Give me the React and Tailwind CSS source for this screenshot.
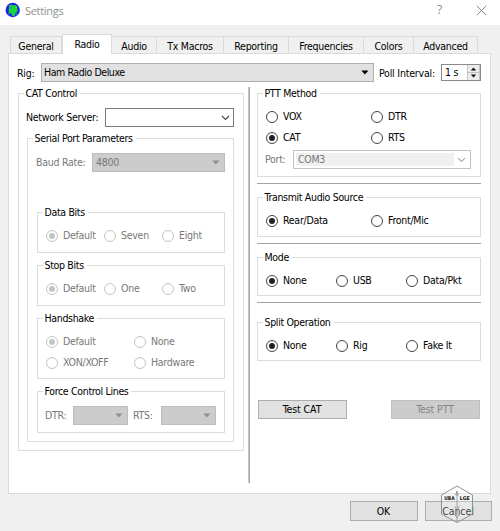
import React from "react";

const TABS = [
  { name: "General", w: "w-[52px]" },
  { name: "Radio", w: "w-[50px]", active: true },
  { name: "Audio", w: "w-[45px]" },
  { name: "Tx Macros", w: "w-[67px]" },
  { name: "Reporting", w: "w-[65px]" },
  { name: "Frequencies", w: "w-[75px]" },
  { name: "Colors", w: "w-[50px]" },
  { name: "Advanced", w: "w-[64px]" },
];

function Group({ title, className, children }) {
  return (
    <fieldset className={`m-0 min-w-0 border border-[#dcdcdc] p-0 ${className}`}>
      <legend className="ml-[5px] h-[13px] pr-[3px] pl-[1.5px] leading-[13px] tracking-[-0.33px] text-black">{title}</legend>
      {children}
    </fieldset>
  );
}

function Radio({ label, checked, disabled, className = "" }) {
  return (
    <label className={`flex h-[13px] items-center gap-[5px] ${disabled ? "text-[#787878]" : "text-black"} ${className}`}>
      <span
        className={`flex size-[12px] shrink-0 items-center justify-center rounded-full border bg-white ${
          disabled ? "border-[#c4c4c4]" : "border-[#444]"
        }`}
      >
        {checked && <span className={`size-[6px] rounded-full ${disabled ? "bg-[#c4c4c4]" : "bg-[#222]"}`} />}
      </span>
      <span className="leading-[13px]">{label}</span>
    </label>
  );
}

function Arrow({ className }) {
  return (
    <svg className={className} width="8" height="5" viewBox="0 0 8 5">
      <path d="M0.3 0.5h7.2L3.9 4.5z" fill="currentColor" />
    </svg>
  );
}

function Chevron({ className }) {
  return (
    <svg className={className} width="9" height="6" viewBox="0 0 9 6" fill="none">
      <path d="M1 1l3.5 3.5L8 1" stroke="currentColor" strokeWidth="1.1" />
    </svg>
  );
}

function GreyCombo({ value, className }) {
  return (
    <div className={`flex items-center justify-between border border-[#bdbdbd] bg-[#cccccc] pr-[4px] pl-[3px] text-[#787878] ${className}`}>
      <span>{value}</span>
      <Arrow className="text-[#8e8e8e]" />
    </div>
  );
}

function Rule({ className }) {
  return <div className={`h-px w-[224px] bg-[#a3a3a3] ${className}`} />;
}

function Button({ children, disabled, className }) {
  return (
    <button
      className={`flex items-center justify-center border tracking-[-0.1px] ${
        disabled ? "border-[#bfbfbf] bg-[#cccccc] text-[#868686]" : "border-[#adadad] bg-[#e1e1e1] text-black"
      } ${className}`}
    >
      {children}
    </button>
  );
}

function Watermark() {
  return (
    <svg className="absolute top-[-16px] left-[15px]" width="34" height="39" viewBox="0 0 34 39">
      <path d="M17 1L32.5 10V29L17 37.5L1.5 29V10Z" fill="#fff" fillOpacity="0.25" stroke="#888" strokeWidth="0.9" />
      <path d="M17 6V37M15.6 10L17 6l1.4 4zM14.8 21l2.2 5 2.2-5M14.5 29l2.5 4 2.5-4" fill="none" stroke="#888" strokeWidth="0.7" />
      <g fontFamily="'DejaVu Sans'" fontWeight="700" fontSize="5" fill="#111" letterSpacing="0">
        <text x="4.2" y="15.2" textLength="10.5" lengthAdjust="spacingAndGlyphs">UBA</text>
        <text x="19.8" y="15.2" textLength="10" lengthAdjust="spacingAndGlyphs">LGE</text>
      </g>
    </svg>
  );
}

export default function App() {
  return (
    <div className="h-[531px] w-[500px] overflow-hidden bg-[#f0f0f0] font-['DejaVu_Sans_Condensed','DejaVu_Sans',sans-serif] text-[10.5px] leading-[13px] tracking-[-0.27px] whitespace-nowrap text-black">
      <header className="flex h-[25px] items-start bg-white pl-[5px]">
        <svg className="mt-[2px]" width="16" height="16" viewBox="0 0 16 16">
          <circle cx="7.7" cy="8" r="7.2" fill="#2222f0" />
          <path d="M4 3.2L7 2.4l1 1.2 2-.6 2.6 1.6-.4 2.4.6 2-2.2 2-.8 2.4-2.4.8-.8-2.4-2.4-1.2L3.6 8l.6-2z" fill="#18d838" />
          <path d="M3.4 10.5l1.4 1.6M12 11l-1 1.6M6 4l1 3" stroke="#18a868" strokeWidth="1.2" />
        </svg>
        <span className="mt-[2px] ml-[4px] w-[395px] font-['Open_Sans',sans-serif] text-[11px] leading-[17px] tracking-[-0.3px] text-[#8f8f8f]">Settings</span>
        <span className="mt-[1px] w-[40px] pl-[17px] font-['Open_Sans',sans-serif] text-[12px] leading-[18px] text-[#888]">?</span>
        <svg className="mt-[5px] ml-[16px]" width="11" height="11" viewBox="0 0 11 11">
          <path d="M0.8 0.8l9.4 9.4M10.2 0.8L0.8 10.2" stroke="#888" strokeWidth="1" />
        </svg>
      </header>

      <nav className="mt-[9px] flex h-[19px] items-end pl-[10px]">
        {TABS.map((t) => (
          <div
            key={t.name}
            className={`flex items-center justify-center ${t.w} ${
              t.active
                ? "z-10 -mb-px h-[20px] border border-b-0 border-[#dcdcdc] bg-white"
                : "h-[17px] border-t border-r border-[#d9d9d9] pt-[2px] first:border-l"
            }`}
          >
            {t.name}
          </div>
        ))}
      </nav>

      <main className="ml-[8px] h-[441px] w-[483px] border border-[#dadada] bg-white">
        <div className="flex h-[33px] items-start pt-[9px] pl-[8px]">
          <span className="mt-[4px] w-[24px]">Rig:</span>
          <div className="flex h-[19px] w-[333px] items-center justify-between border border-[#adadad] bg-[#e1e1e1] pr-[4px] pl-[2px] tracking-[-0.42px]">
            <span>Ham Radio Deluxe</span>
            <Arrow />
          </div>
          <span className="mt-[4px] ml-[5px] w-[62px] tracking-[-0.2px]">Poll Interval:</span>
          <div className="mt-px flex h-[17px] w-[40px] items-center justify-between border border-[#8a8a8a] bg-white pl-[3px]">
            <span>1 s</span>
            <div className="flex h-full w-[13px] flex-col bg-[#ececec]">
              <svg width="13" height="15" viewBox="0 0 13 15">
                <path d="M0.5 0v15M0 7.5h13M12.5 0v15" stroke="#c4c4c4" />
                <path d="M3.8 5.5h5.4L6.5 2.5zM3.8 9.5h5.4L6.5 12.5z" fill="#111" />
              </svg>
            </div>
          </div>
        </div>

        <div className="flex">
          <Group title="CAT Control" className="ml-[9px] h-[364px] w-[226px]">
            <div className="mt-[8px] flex h-[19px] items-center pl-[7px]">
              <span className="w-[79px]">Network Server:</span>
              <div className="flex h-[19px] w-[129px] items-center justify-end border border-[#7a7a7a] bg-white pr-[3px]">
                <Chevron className="text-[#444]" />
              </div>
            </div>
            <Group title="Serial Port Parameters" className="mt-[5px] ml-[8px] h-[310px] w-[207px]">
              <div className="mt-[8px] flex h-[19px] items-center pl-[8px] text-[#787878]">
                <span className="w-[56px]">Baud Rate:</span>
                <GreyCombo value="4800" className="h-[19px] w-[133px]" />
              </div>
              <div className="mt-[34px] ml-[9px] flex w-[188px] flex-col gap-[6px]">
                <Group title="Data Bits" className="h-[47px]">
                  <div className="mt-[10px] flex pl-[8px]">
                    <Radio label="Default" checked disabled className="w-[58px]" />
                    <Radio label="Seven" disabled className="w-[58px]" />
                    <Radio label="Eight" disabled />
                  </div>
                </Group>
                <Group title="Stop Bits" className="h-[47px]">
                  <div className="mt-[10px] flex pl-[8px]">
                    <Radio label="Default" checked disabled className="w-[58px]" />
                    <Radio label="One" disabled className="w-[58px]" />
                    <Radio label="Two" disabled />
                  </div>
                </Group>
                <Group title="Handshake" className="h-[67px]">
                  <div className="mt-[10px] grid grid-cols-[88px_1fr] gap-y-[8px] pl-[8px]">
                    <Radio label="Default" checked disabled />
                    <Radio label="None" disabled />
                    <Radio label="XON/XOFF" disabled />
                    <Radio label="Hardware" disabled />
                  </div>
                </Group>
                <Group title="Force Control Lines" className="h-[48px]">
                  <div className="mt-[8px] flex h-[19px] items-center pl-[7px] text-[#787878]">
                    <span className="w-[28px]">DTR:</span>
                    <GreyCombo className="h-[19px] w-[55px]" />
                    <span className="ml-[5px] w-[28px]">RTS:</span>
                    <GreyCombo className="h-[19px] w-[55px]" />
                  </div>
                </Group>
              </div>
            </Group>
          </Group>

          <div className="ml-[4px] h-[396px] w-[2px] border-r border-[#a8a8a8] bg-[#c6c6c6]" />

          <div className="ml-[7px] w-[224px]">
            <Group title="PTT Method" className="h-[90px]">
              <div className="mt-[10px] grid grid-cols-[105px_1fr] gap-y-[8px] pl-[8px]">
                <Radio label="VOX" />
                <Radio label="DTR" />
                <Radio label="CAT" checked />
                <Radio label="RTS" />
              </div>
              <div className="mt-[6px] flex h-[19px] items-center pl-[7px] text-[#787878]">
                <span className="w-[28px]">Port:</span>
                <div className="flex h-[19px] w-[178px] items-center justify-between border border-[#c4c4c4] bg-white p-[2px] pr-[4px]">
                  <span className="h-[13px] w-[158px] bg-[#f0f0f0] pl-[2px]">COM3</span>
                  <Chevron className="text-[#b0b0b0]" />
                </div>
              </div>
            </Group>
            <Rule className="mt-[6px]" />
            <Group title="Transmit Audio Source" className="mt-[7px] h-[46px]">
              <div className="mt-[10px] grid grid-cols-[105px_1fr] pl-[8px]">
                <Radio label="Rear/Data" checked />
                <Radio label="Front/Mic" />
              </div>
            </Group>
            <Rule className="mt-[6px]" />
            <Group title="Mode" className="mt-[7px] h-[45px]">
              <div className="mt-[10px] grid grid-cols-[70px_70px_1fr] pl-[8px]">
                <Radio label="None" checked />
                <Radio label="USB" />
                <Radio label="Data/Pkt" />
              </div>
            </Group>
            <Rule className="mt-[6px]" />
            <Group title="Split Operation" className="mt-[13px] h-[45px]">
              <div className="mt-[10px] grid grid-cols-[70px_70px_1fr] pl-[8px]">
                <Radio label="None" checked />
                <Radio label="Rig" />
                <Radio label="Fake It" />
              </div>
            </Group>
            <div className="mt-[39px] flex justify-between pr-px pl-px">
              <Button className="h-[19px] w-[89px] pr-px">Test CAT</Button>
              <Button className="h-[19px] w-[89px] pr-px" disabled>Test PTT</Button>
            </div>
          </div>
        </div>
      </main>

      <footer className="mt-[7px] flex justify-end gap-[7px] pr-[8px]">
        <Button className="h-[20px] w-[68px] pr-px">OK</Button>
        <div className="relative">
          <Button className="h-[20px] w-[67px] pr-px">Cancel</Button>
          <Watermark />
        </div>
      </footer>
    </div>
  );
}
